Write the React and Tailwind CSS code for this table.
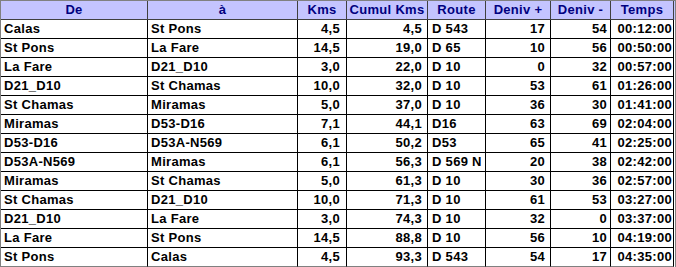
import React from 'react'

// column widths include the 1px right rule
const COLS = [
  { key: 'de', label: 'De', w: 'w-[147px]', cell: 'text-left pl-[3px]' },
  { key: 'a', label: 'à', w: 'w-[150px]', cell: 'text-left pl-[3px]' },
  { key: 'kms', label: 'Kms', w: 'w-[49px]', cell: 'text-right pr-[6px]' },
  { key: 'cumul', label: 'Cumul Kms', w: 'w-[81px]', cell: 'text-right pr-[5px]' },
  { key: 'route', label: 'Route', w: 'w-[58px]', cell: 'text-left pl-[4px]' },
  { key: 'dplus', label: 'Deniv +', w: 'w-[65px]', cell: 'text-right pr-[5px]' },
  { key: 'dminus', label: 'Deniv -', w: 'w-[60px]', cell: 'text-right pr-[3px]' },
  { key: 'temps', label: 'Temps', w: 'w-[63px]', cell: 'text-right pr-[1px]' },
]

const ROWS = [
  ['Calas', 'St Pons', '4,5', '4,5', 'D 543', '17', '54', '00:12:00'],
  ['St Pons', 'La Fare', '14,5', '19,0', 'D 65', '10', '56', '00:50:00'],
  ['La Fare', 'D21_D10', '3,0', '22,0', 'D 10', '0', '32', '00:57:00'],
  ['D21_D10', 'St Chamas', '10,0', '32,0', 'D 10', '53', '61', '01:26:00'],
  ['St Chamas', 'Miramas', '5,0', '37,0', 'D 10', '36', '30', '01:41:00'],
  ['Miramas', 'D53-D16', '7,1', '44,1', 'D16', '63', '69', '02:04:00'],
  ['D53-D16', 'D53A-N569', '6,1', '50,2', 'D53', '65', '41', '02:25:00'],
  ['D53A-N569', 'Miramas', '6,1', '56,3', 'D 569 N', '20', '38', '02:42:00'],
  ['Miramas', 'St Chamas', '5,0', '61,3', 'D 10', '30', '36', '02:57:00'],
  ['St Chamas', 'D21_D10', '10,0', '71,3', 'D 10', '61', '53', '03:27:00'],
  ['D21_D10', 'La Fare', '3,0', '74,3', 'D 10', '32', '0', '03:37:00'],
  ['La Fare', 'St Pons', '14,5', '88,8', 'D 10', '56', '10', '04:19:00'],
  ['St Pons', 'Calas', '4,5', '93,3', 'D 543', '54', '17', '04:35:00'],
]

export default function App() {
  return (
    <div className="w-[676px] h-[267px] bg-white overflow-hidden font-['Liberation_Sans',Arial,sans-serif] font-bold text-[13px] tracking-[0.3px]">
      <div className="w-[676px] border-t border-l border-r border-[#808080]">
        {/* Header */}
        <div className="flex h-[19px] bg-[#c4c4ff]">
          {COLS.map(c => (
            <div
              key={c.key}
              className={`${c.w} shrink-0 border-r border-b border-[#404040] text-[#000080] text-center leading-[18px] whitespace-nowrap overflow-hidden`}
            >
              {c.label}
            </div>
          ))}
        </div>

        {/* Data rows */}
        {ROWS.map((row, i) => (
          <div key={i} className="flex h-[19px]">
            {row.map((v, j) => (
              <div
                key={j}
                className={`${COLS[j].w} ${COLS[j].cell} shrink-0 border-r border-b ${i === ROWS.length - 1 ? 'border-b-[#808080]' : ''} border-black text-black leading-[18px] whitespace-nowrap overflow-hidden`}
              >
                {v}
              </div>
            ))}
          </div>
        ))}
      </div>
    </div>
  )
}
